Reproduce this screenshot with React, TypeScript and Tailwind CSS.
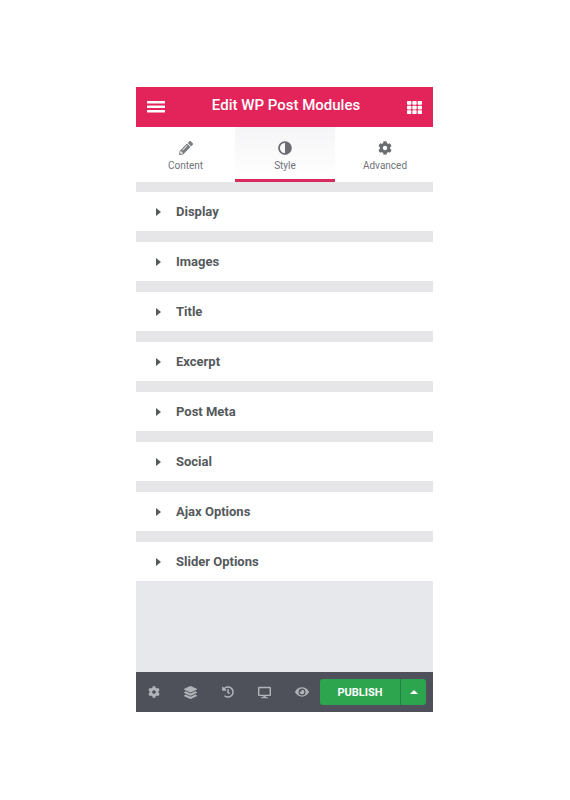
import React from "react";
import { FaTh, FaPencilAlt, FaAdjust, FaCog, FaLayerGroup, FaHistory, FaDesktop, FaEye } from "react-icons/fa";

const rows = ["Display", "Images", "Title", "Excerpt", "Post Meta", "Social", "Ajax Options", "Slider Options"];

export default function App() {
  return (
    <div className="w-[570px] h-[800px] bg-white pt-[87px] pl-[136px] font-['Roboto',sans-serif]">
      <div className="w-[297px] h-[625px] flex flex-col bg-[#e6e8ec]">
        <header className="h-10 bg-[#e3245a] flex items-center justify-between pl-[11px] pr-[11px] text-white">
          <svg width="18" height="12" viewBox="0 0 18 12" fill="currentColor">
            <rect x="0" y="0" width="18" height="2.5" rx="0.5" />
            <rect x="0" y="4.5" width="18" height="2.5" rx="0.5" />
            <rect x="0" y="9" width="18" height="2.5" rx="0.5" />
          </svg>
          <span className="text-[15px] font-medium leading-none -mt-[3px]">Edit WP Post Modules</span>
          <FaTh className="w-[15px] h-[15px]" />
        </header>
        <nav className="h-[55px] flex bg-white text-[#6f7278]">
          <div className="w-[99px] flex flex-col items-center pt-[14px]">
            <FaPencilAlt className="w-[14px] h-[14px] text-[#7d7e82]" />
            <span className="text-[10px] mt-[5px] leading-3">Content</span>
          </div>
          <div className="w-[100px] flex flex-col items-center pt-[14px] border-b-[3px] border-[#d72b5d] bg-gradient-to-b from-[#f5f5f7] to-white">
            <FaAdjust className="w-[14px] h-[14px] text-[#6b6d72] -scale-x-100" />
            <span className="text-[10px] mt-[5px] leading-3">Style</span>
          </div>
          <div className="w-[98px] flex flex-col items-center pt-[14px] pl-[2px]">
            <FaCog className="w-[14px] h-[14px] text-[#6b6d72]" />
            <span className="text-[10px] mt-[5px] leading-3">Advanced</span>
          </div>
        </nav>
        <div className="flex flex-col gap-[11px] pt-[10px] bg-[#e6e5e8]">
          {rows.map((r) => (
            <div key={r} className="h-[39px] bg-white flex items-center pl-[20px] text-[#55595c]">
              <svg width="5" height="8" viewBox="0 0 5 8" fill="currentColor">
                <path d="M0 0L5 4L0 8Z" />
              </svg>
              <span className="ml-[15px] text-[13px] font-bold leading-none">{r}</span>
            </div>
          ))}
        </div>
        <div className="flex-1 bg-[#e6e8ec]" />
        <footer className="h-10 bg-[#4e5159] flex items-center text-[#b0b3b8]">
          <div className="w-[184px] flex items-center">
            <span className="w-9 flex justify-center"><FaCog className="w-3 h-3" /></span>
            <span className="w-[37px] flex justify-center"><FaLayerGroup className="w-[13px] h-[13px]" /></span>
            <span className="w-[37px] flex justify-center"><FaHistory className="w-3 h-3" /></span>
            <span className="w-[37px] flex justify-center"><FaDesktop className="w-[13px] h-[13px]" /></span>
            <span className="w-[37px] flex justify-center"><FaEye className="w-[14px] h-[14px]" /></span>
          </div>
          <div className="flex h-[26px] text-white">
            <div className="w-[80px] bg-[#2da44e] rounded-l-[3px] flex items-center justify-center text-[11px] font-bold pt-[2px]">PUBLISH</div>
            <div className="w-[26px] border-l border-[#24803d] bg-[#2da44e] rounded-r-[3px] flex items-center justify-center">
              <svg width="8" height="4" viewBox="0 0 8 4" fill="currentColor">
                <path d="M4 0L8 4H0Z" />
              </svg>
            </div>
          </div>
        </footer>
      </div>
    </div>
  );
}
